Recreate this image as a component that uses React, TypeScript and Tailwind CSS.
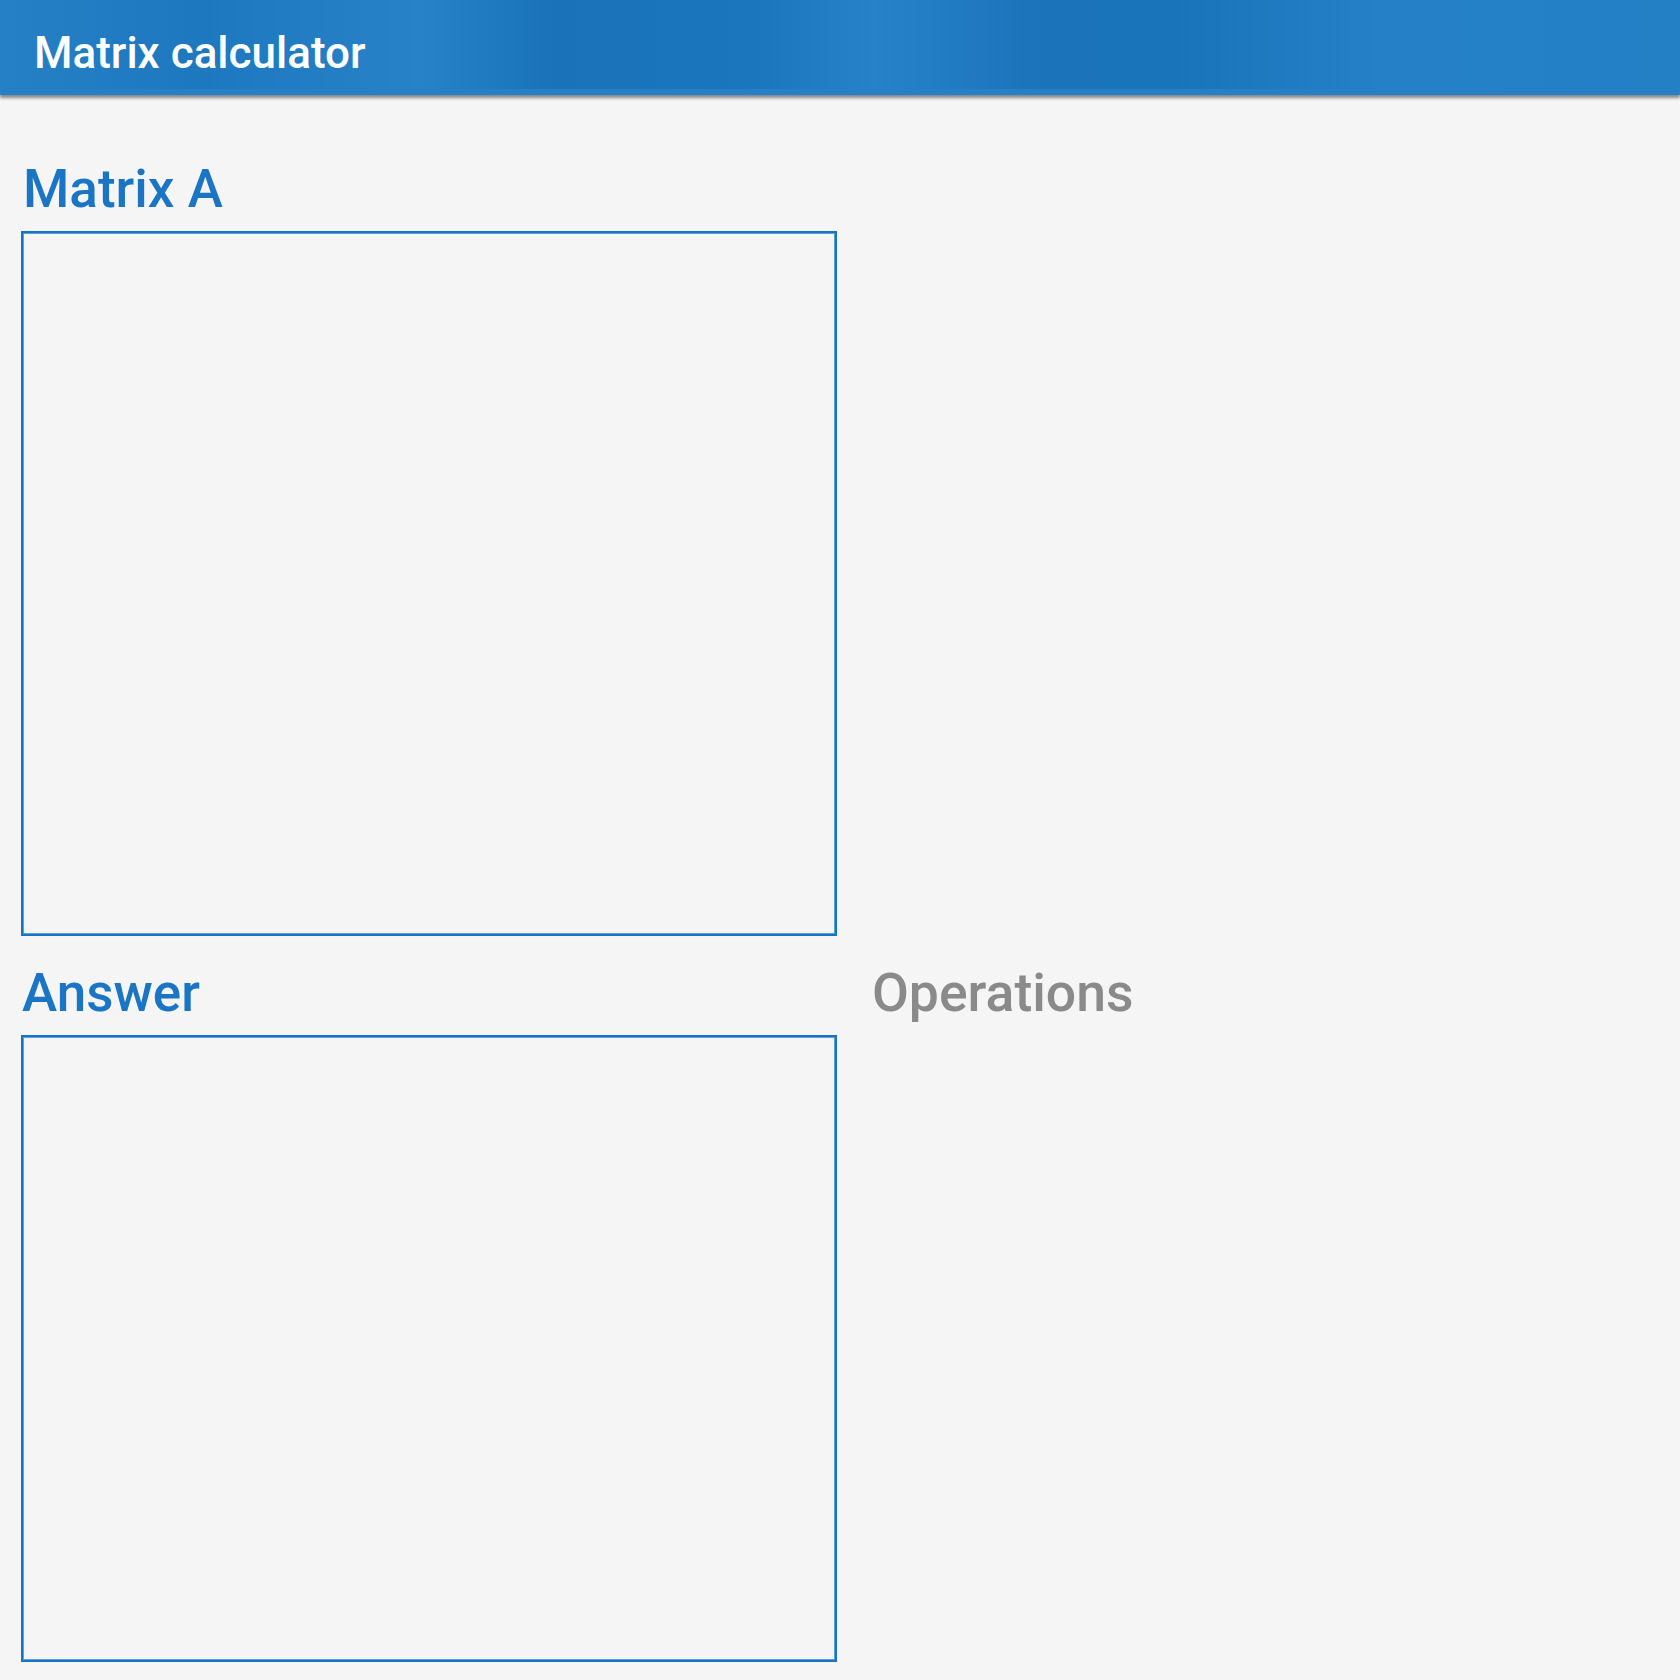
import React from "react";

export default function App() {
  return (
    <div className="w-[1680px] h-[1680px] bg-[#f5f5f5] overflow-hidden" style={{ fontFamily: "Roboto, 'Noto Sans', sans-serif" }}>
      <header className="relative h-[95px] bg-[linear-gradient(90deg,#2580c6_0%,#1d78bf_12%,#2782c8_25%,#1a73b9_33%,#1c76bd_45%,#2882ca_52%,#1b74ba_62%,#1a74b9_70%,#2580c8_82%,#2380c5_100%)] shadow-[0_3px_3px_rgba(0,0,0,0.45)] z-10 flex flex-col">
        <div className="flex-1 flex items-end pl-[34px] pb-[14px]">
          <h1 className="text-white text-[44px] leading-none font-medium">Matrix calculator</h1>
        </div>
        <div className="h-[6px] bg-[#2680c8]" />
      </header>
      <main className="flex gap-[35px] pl-[21px]">
        <div className="flex flex-col w-[816px]">
          <h2 className="mt-[61px] pl-[2px] text-[53px] leading-[66px] font-medium text-[#1a75c4]">Matrix A</h2>
          <div className="mt-[9px] h-[705px] border-2 border-[#1773c4] shadow-[inset_0_0_0_1px_#5a9fd8]" />
          <h2 className="mt-[24px] pl-[1px] text-[53px] leading-[66px] font-medium text-[#1a75c4]">Answer</h2>
          <div className="mt-[9px] h-[627px] border-2 border-[#1773c4] shadow-[inset_0_0_0_1px_#5a9fd8]" />
        </div>
        <div className="flex flex-col">
          <h2 className="mt-[865px] text-[53.5px] leading-[66px] font-medium text-[#8a8a8a]">Operations</h2>
        </div>
      </main>
    </div>
  );
}
